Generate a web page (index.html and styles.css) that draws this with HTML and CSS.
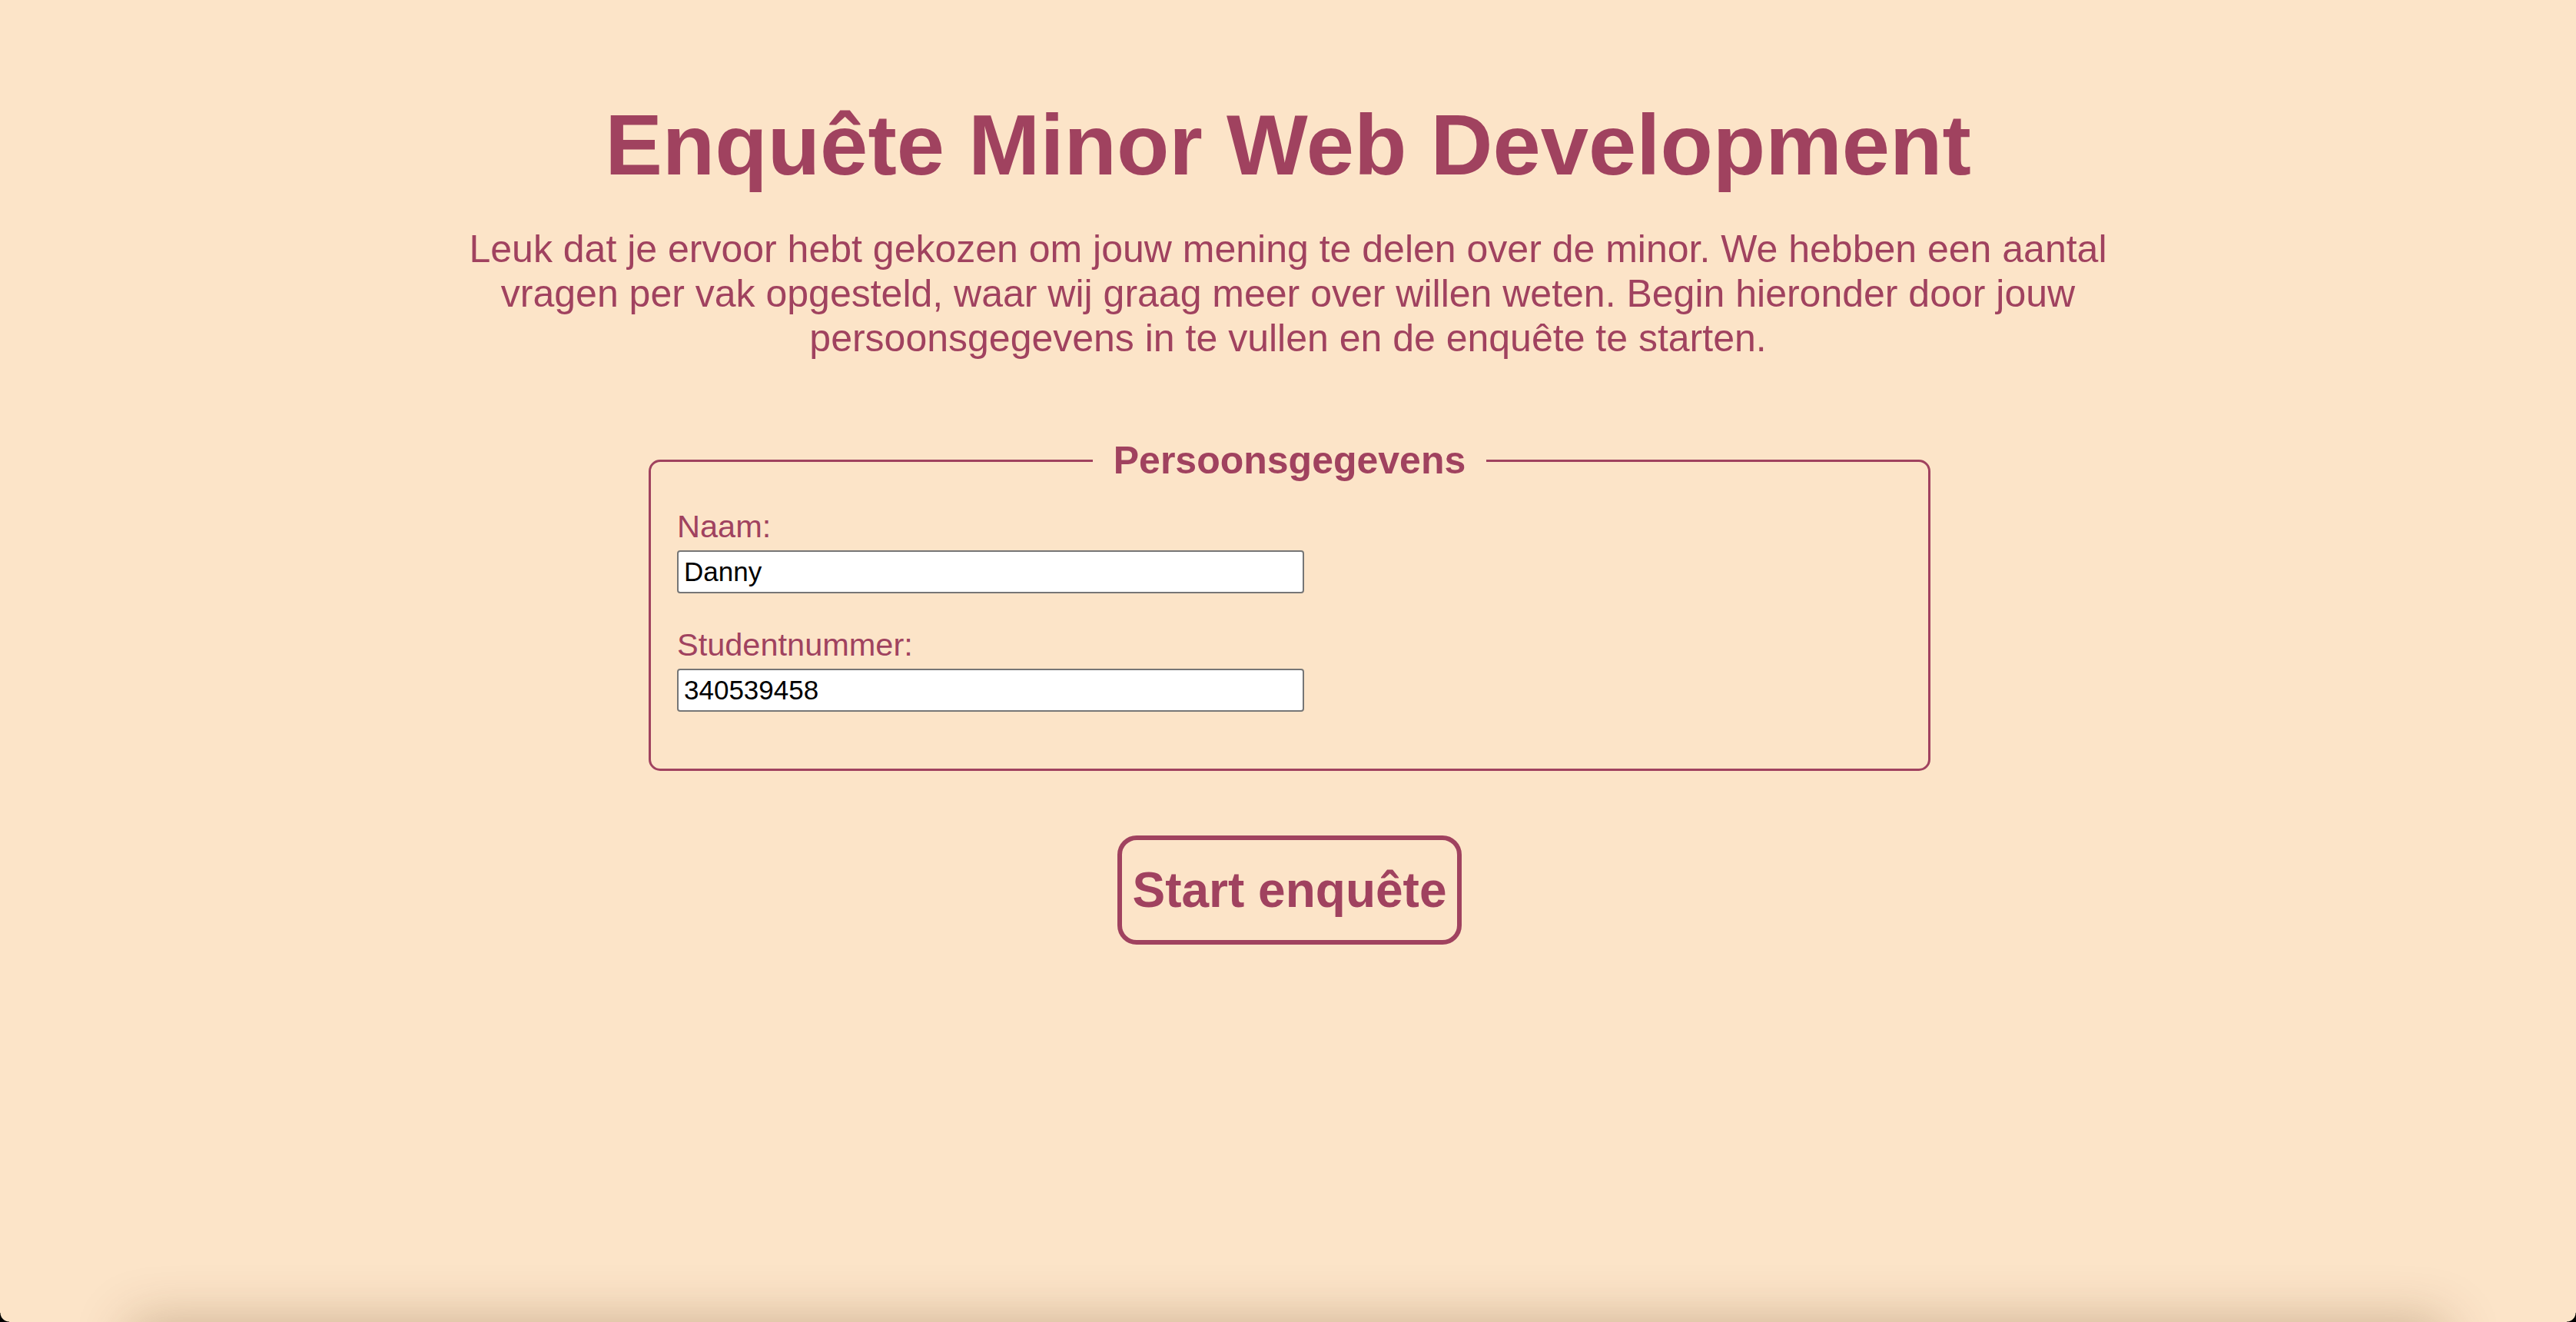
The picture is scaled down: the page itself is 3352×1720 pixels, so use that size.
FILE: index.html
```html
<!DOCTYPE html>
<html lang="nl">
<head>
<meta charset="utf-8">
<title>Enquête Minor Web Development</title>
<link rel="stylesheet" href="styles.css">
</head>
<body>
<main class="page">
  <h1 class="title">Enquête Minor Web Development</h1>
  <p class="intro">Leuk dat je ervoor hebt gekozen om jouw mening te delen over de minor. We hebben een aantal vragen per vak opgesteld, waar wij graag meer over willen weten. Begin hieronder door jouw persoonsgegevens in te vullen en de enquête te starten.</p>
  <form class="form">
    <fieldset class="group">
      <legend class="group-title">Persoonsgegevens</legend>
      <div class="field">
        <label class="field-label" for="naam">Naam:</label>
        <input class="field-input" id="naam" type="text" value="Danny">
      </div>
      <div class="field">
        <label class="field-label" for="nummer">Studentnummer:</label>
        <input class="field-input" id="nummer" type="text" value="340539458">
      </div>
    </fieldset>
    <button class="start" type="button">Start enquête</button>
  </form>
</main>
<div class="dock-shadow"></div>
<div class="corner corner-left"></div>
<div class="corner corner-right"></div>
</body>
</html>
```
FILE: styles.css
```css
html, body {
  margin: 0;
  padding: 0;
}

body {
  background: #fce4c8;
  color: #a0425f;
  font-family: "Liberation Sans", Arial, Helvetica, sans-serif;
  min-height: 100vh;
  overflow: hidden;
}

.page {
  display: flex;
  flex-direction: column;
  align-items: center;
  padding-top: 124px;
}

.title {
  margin: 0;
  font-size: 112px;
  font-weight: bold;
  line-height: normal;
}

.intro {
  margin: 42px 0 0;
  max-width: 2200px;
  font-size: 50px;
  line-height: normal;
  text-align: center;
}

.form {
  display: flex;
  flex-direction: column;
  align-items: center;
  margin-top: 101px;
  padding-left: 4px;
}

.group {
  box-sizing: border-box;
  width: 1668px;
  margin: 0;
  padding: 34px;
  border: 3px solid #a0425f;
  border-radius: 15px;
}

.group-title {
  margin: 0 auto;
  padding: 0 27px;
  font-size: 50px;
  font-weight: bold;
  line-height: normal;
}

.field {
  display: flex;
  flex-direction: column;
  align-items: flex-start;
  gap: 9px;
}

.field + .field {
  margin-top: 44px;
}

.field:last-child {
  margin-bottom: 40px;
}

.field-label {
  font-size: 41.5px;
  line-height: 45px;
}

.field-input {
  box-sizing: border-box;
  width: 816px;
  height: 56px;
  margin: 0;
  padding: 0 7px;
  border: 2px solid #767676;
  border-radius: 4px;
  background: #fff;
  color: #000;
  font-family: "Liberation Sans", Arial, Helvetica, sans-serif;
  font-size: 35px;
}

.start {
  margin-top: 84px;
  padding: 28px 14px;
  border: 6px solid #a0425f;
  border-radius: 25px;
  background: transparent;
  color: #a0425f;
  font-family: "Liberation Sans", Arial, Helvetica, sans-serif;
  font-size: 64px;
  font-weight: bold;
  line-height: normal;
}

.dock-shadow {
  position: fixed;
  left: 170px;
  right: 170px;
  top: 100%;
  height: 120px;
  box-shadow: 0 0 70px 0 rgba(90, 50, 10, 0.3);
}

.corner {
  position: fixed;
  bottom: 0;
  width: 12px;
  height: 12px;
}

.corner-left {
  left: 0;
  background: radial-gradient(circle at 100% 0, transparent 11px, #000 12px);
}

.corner-right {
  right: 0;
  background: radial-gradient(circle at 0 0, transparent 11px, #000 12px);
}
```
